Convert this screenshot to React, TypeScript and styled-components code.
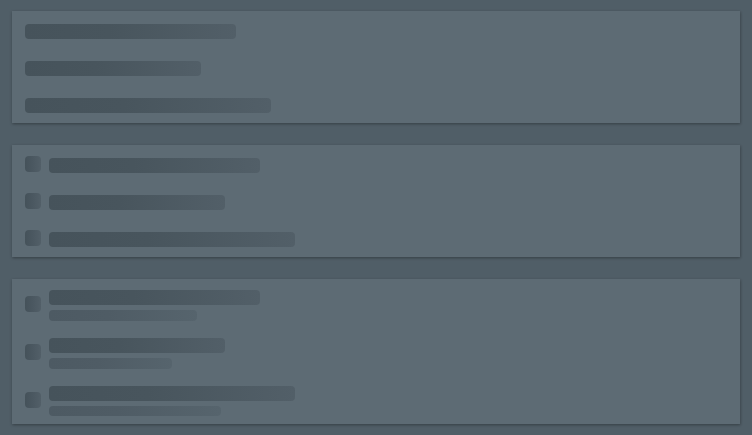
import React from "react";
import styled, { createGlobalStyle } from "styled-components";

const GlobalStyle = createGlobalStyle`
  html, body {
    margin: 0;
    padding: 0;
    background: #505e67;
    font-family: "Liberation Sans", Arial, sans-serif;
  }
  body {
    min-height: 435px;
  }
`;

const Page = styled.div`
  display: flex;
  flex-direction: column;
  gap: 22.33px;
  padding: 11px 12px;
  min-height: 435px;
  box-sizing: border-box;
`;

const Panel = styled.section<{ $pad: string; $gap: string }>`
  display: flex;
  flex-direction: column;
  gap: ${(p) => p.$gap};
  padding: ${(p) => p.$pad};
  background: #5d6b74;
  box-shadow: 0 1px 3px rgba(0, 0, 0, 0.22), 1px 1px 2px rgba(0, 0, 0, 0.12);
`;

const Row = styled.div`
  display: flex;
  align-items: center;
  gap: 8px;
`;

const Lines = styled.div`
  display: flex;
  flex-direction: column;
  gap: 5.33px;
`;

const Bar = styled.div<{ $w: number }>`
  width: ${(p) => p.$w}px;
  height: 14.67px;
  border-radius: 4px;
  background: linear-gradient(90deg, #46535b 0%, #48555d 40%, #525f68 100%);
`;

const SubBar = styled.div<{ $w: number }>`
  width: ${(p) => p.$w}px;
  height: 10.67px;
  border-radius: 4px;
  background: linear-gradient(90deg, #4d5a63 0%, #4f5c65 40%, #56646d 100%);
`;

const Square = styled.div`
  flex: none;
  width: 16px;
  height: 16px;
  margin-top: -2.67px;
  border-radius: 4px;
  background: linear-gradient(90deg, #45525a 0%, #4b5861 50%, #525f68 100%);
`;

const widths = [211, 176, 246];

export default function App() {
  return (
    <>
      <GlobalStyle />
      <Page>
        <Panel $pad="13px 13px 10px" $gap="22.33px">
          {widths.map((w) => (
            <Row key={w}>
              <Bar $w={w} />
            </Row>
          ))}
        </Panel>
        <Panel $pad="13px 13px 10px" $gap="22.33px">
          {widths.map((w) => (
            <Row key={w}>
              <Square />
              <Bar $w={w} />
            </Row>
          ))}
        </Panel>
        <Panel $pad="11px 13px 7.33px" $gap="17.33px">
          {widths.map((w) => (
            <Row key={w}>
              <Square />
              <Lines>
                <Bar $w={w} />
                <SubBar $w={Math.round(w * 0.7)} />
              </Lines>
            </Row>
          ))}
        </Panel>
      </Page>
    </>
  );
}
